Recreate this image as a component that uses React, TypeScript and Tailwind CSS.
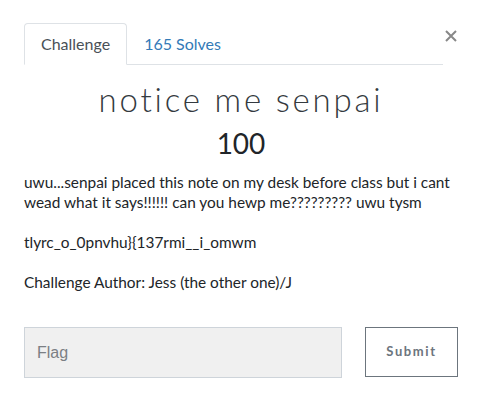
import React from 'react';

export default function App() {
  return (
    <div className="w-[482px] h-[414px] bg-white font-['Lato',sans-serif] text-[#212529] pl-6 pr-6 pt-[23px]">
      <div className="flex items-start">
        <ul className="flex w-[420px] border-b border-[#dee2e6]">
          <li className="-mb-px h-[42px] px-[16px] flex items-center border border-[#dee2e6] border-b-white rounded-t-[4px] text-[16px] text-[#495057] bg-white">
            Challenge
          </li>
          <li className="h-[41px] px-[17px] flex items-center text-[16px] text-[#337ab7]">
            165 Solves
          </li>
        </ul>
        <button className="ml-[1px] mt-[5px] w-[14px] h-[16px] flex items-center justify-center text-[#888]">
          <svg width="12" height="12" viewBox="0 0 12 12">
            <path d="M1 1 L11 11 M11 1 L1 11" stroke="currentColor" strokeWidth="2" />
          </svg>
        </button>
      </div>

      <h3 className="mt-[15px] text-center text-[33px] leading-[38px] font-light tracking-[2.8px] text-[#343a40]">
        notice me senpai
      </h3>
      <h4 className="mt-[8px] text-center text-[28px] leading-[34px] text-[#212529]">100</h4>

      <div className="mt-[12px] text-[15.4px] leading-[20px] -mr-[6px]">
        <p>uwu...senpai placed this note on my desk before class but i cant wead what it says!!!!!! can you hewp me????????? uwu tysm</p>
        <p className="mt-[20px]">{'tlyrc_o_0pnvhu}{137rmi__i_omwm'}</p>
        <p className="mt-[20px]">Challenge Author: Jess (the other one)/J</p>
      </div>

      <div className="mt-[35px] flex items-start">
        <input
          placeholder="Flag"
          className="w-[318px] h-[51px] bg-[#f0f0f0] border border-[#ced4da] px-[12px] text-[16px] font-['Liberation_Sans',sans-serif] placeholder:text-[#7b7f84] outline-none"
        />
        <button className="ml-[23px] w-[93px] h-[50px] border border-[#6c757d] text-[13px] font-bold tracking-[1.6px] text-[#6c757d] bg-white">
          Submit
        </button>
      </div>
    </div>
  );
}
